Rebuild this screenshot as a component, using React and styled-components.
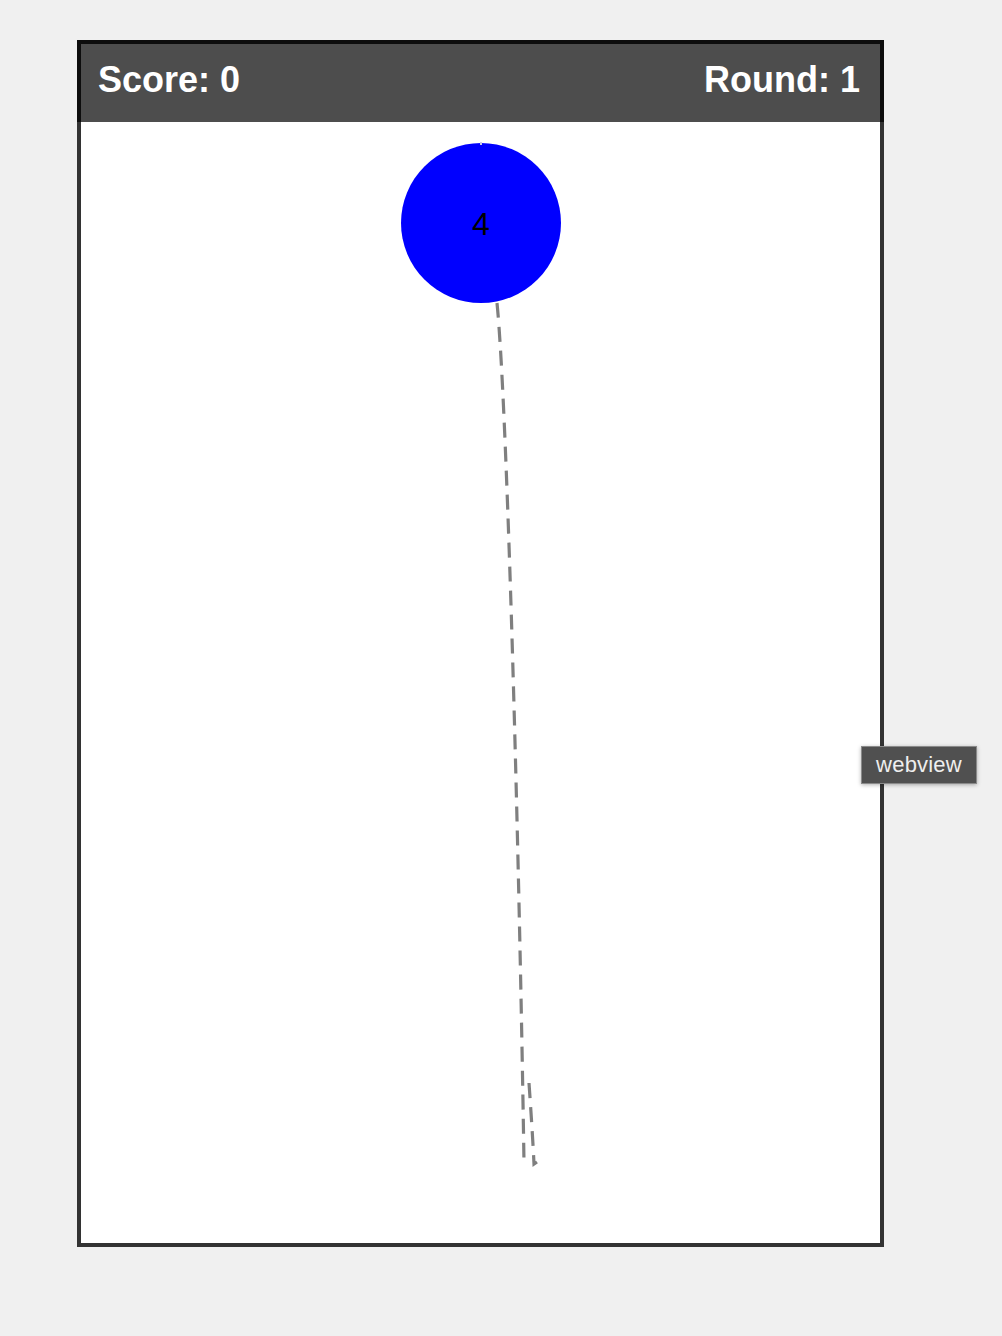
// React Libraries
import React from 'react';

// Styles
import styled, { createGlobalStyle } from 'styled-components';

const GlobalStyle = createGlobalStyle`
  html, body {
    margin: 0;
    padding: 0;
    background: #f0f0f0;
    font-family: "Liberation Sans", Arial, sans-serif;
  }
`;

const Page = styled.div`
  position: relative;
  min-height: 1336px;
  padding: 40px 0 0 77px;
  box-sizing: border-box;
`;

const GameFrame = styled.div`
  width: 807px;
  height: 1207px;
  box-sizing: border-box;
  border: 4px solid #333333;
  background: #ffffff;
  display: flex;
  flex-direction: column;
`;

const ScoreBar = styled.div`
  flex: none;
  box-sizing: border-box;
  height: 82px;
  margin: -4px -4px 0;
  border: 4px solid #0d0d0d;
  border-bottom: none;
  background: #4d4d4d;
  display: flex;
  align-items: center;
  justify-content: space-between;
  padding: 0 20px 6px 17px;
`;

const Stat = styled.span`
  color: #ffffff;
  font-size: 36px;
  font-weight: 700;
  line-height: 1;
`;

const Field = styled.svg`
  display: block;
  flex: 1;
  width: 100%;
  min-height: 0;
`;

const Tooltip = styled.div`
  position: absolute;
  left: 861px;
  top: 746px;
  width: 116px;
  height: 38px;
  box-sizing: border-box;
  background: #505050;
  border: 1px solid #8a8a8a;
  box-shadow: 0 1px 4px rgba(0, 0, 0, 0.3);
  color: #eeeeee;
  font-size: 22px;
  display: flex;
  align-items: center;
  justify-content: center;
  letter-spacing: 0.2px;
`;

const balloon = { x: 400, y: 101, r: 80, value: 4 };

// Component
function App() {
  return (
    <Page>
      <GlobalStyle />
      <GameFrame>
        <ScoreBar>
          <Stat>Score: 0</Stat>
          <Stat>Round: 1</Stat>
        </ScoreBar>
        <Field viewBox="0 0 799 1121" preserveAspectRatio="xMinYMin meet">
          <path
            d="M416 181 C426 280, 438 720, 443 1041"
            fill="none"
            stroke="#7f7f7f"
            strokeWidth="3.2"
            strokeDasharray="15 9"
          />
          <path
            d="M448 961 C450 990, 452 1020, 453 1042 L456 1040"
            fill="none"
            stroke="#7f7f7f"
            strokeWidth="3.2"
            strokeDasharray="15 9"
          />
          <circle cx={balloon.x} cy={balloon.y} r={balloon.r} fill="#0000ff" />
          <line x1="400" y1="20" x2="400" y2="23" stroke="#c8c8e8" strokeWidth="2" />
          <text
            x={balloon.x}
            y={balloon.y + 1}
            textAnchor="middle"
            dominantBaseline="central"
            fontFamily="Liberation Sans, Arial, sans-serif"
            fontSize="32"
            fill="#000000"
          >
            {balloon.value}
          </text>
        </Field>
      </GameFrame>
      <Tooltip>webview</Tooltip>
    </Page>
  );
}

export default App;
